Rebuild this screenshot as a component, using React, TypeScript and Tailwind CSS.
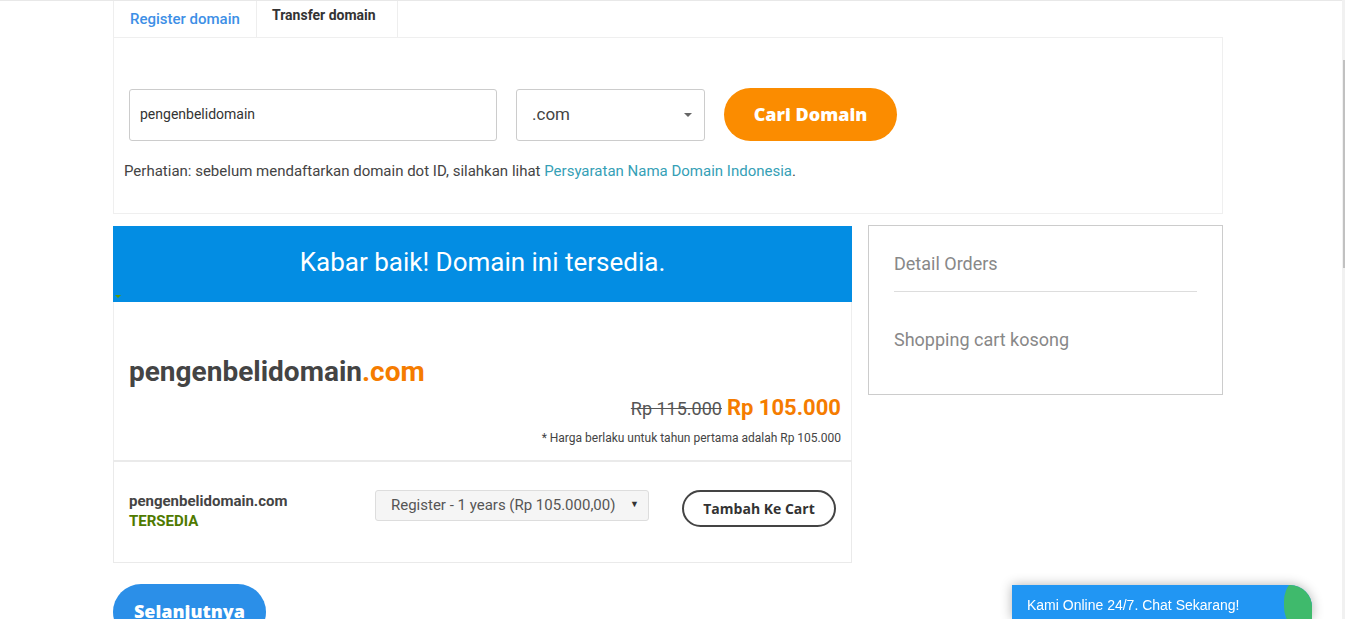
import React from "react";

const roboto = { fontFamily: "Roboto, 'Noto Sans', sans-serif" };
const heavy = { fontFamily: "'Open Sans', 'Noto Sans', sans-serif" };

export default function App() {
  return (
    <div className="flex h-[619px] overflow-hidden bg-white text-[#444]" style={roboto}>
      <div className="flex-1 border-t border-[#e8e8e8]">
        <div className="ml-[113px] w-[1110px]">
          {/* TABS */}
          <div className="flex h-[36px]">
            <div className="w-[143px] border-l border-[#eee] pl-[16px] pt-[7px] text-[15px] font-medium text-[#3d8fe6]">
              Register domain
            </div>
            <div className="w-[142px] border-x border-[#eee] pl-[15px] pt-[4px] text-[14px] font-bold text-[#333]">
              Transfer domain
            </div>
          </div>

          {/* SEARCH PANEL */}
          <div className="h-[177px] border border-[#efefef]">
            <div className="flex items-center pl-[15px] pt-[50px]">
              <div className="flex h-[52px] w-[368px] items-center rounded-[3px] border border-[#ccc] pl-[10px] text-[14px] text-[#333]">
                pengenbelidomain
              </div>
              <div className="ml-[19px] flex h-[52px] w-[189px] items-center justify-between rounded-[3px] border border-[#ccc] pl-[15px] pr-[12px] text-[17px] text-[#444]">
                <span>.com</span>
                <span className="h-0 w-0 border-x-[4px] border-t-[4px] border-x-transparent border-t-[#666]" />
              </div>
              <button
                className="ml-[19px] h-[53px] w-[173px] rounded-full bg-[#fb8c00] text-[18px] font-extrabold text-white"
                style={heavy}
              >
                Cari Domain
              </button>
            </div>
            <p className="mt-[20px] pl-[10px] text-[15px] leading-[20px] text-[#444]">
              Perhatian: sebelum mendaftarkan domain dot ID, silahkan lihat{" "}
              <span className="text-[#35a0b6]">Persyaratan Nama Domain Indonesia</span>.
            </p>
          </div>

          {/* RESULT */}
          <div className="mt-[12px] flex gap-[16px]">
            <div className="w-[739px]">
              <div className="relative flex h-[76px] items-center justify-center bg-[#038de3] pb-[4px] text-[26px] text-white">
                Kabar baik! Domain ini tersedia.
                <span className="absolute bottom-[4px] left-[2px] h-0 w-0 border-x-[3px] border-t-[3px] border-x-transparent border-t-[#5c9a00]" />
              </div>
              <div className="h-[158px] border-x border-[#eee] pl-[15px] pr-[10px] pt-[53px]">
                <div className="text-[28px] font-bold leading-[34px] text-[#444]">
                  pengenbelidomain<span className="text-[#f57c00]">.com</span>
                </div>
                <div className="mt-[5px] flex items-baseline justify-end gap-[5px] leading-[28px]">
                  <span className="text-[18px] text-[#555] line-through">Rp 115.000</span>
                  <span className="text-[22px] font-bold text-[#f57c00]">Rp 105.000</span>
                </div>
                <div className="mt-[7px] text-right text-[12px] leading-[16px] text-[#444]">
                  * Harga berlaku untuk tahun pertama adalah Rp 105.000
                </div>
              </div>
              <div className="flex h-[103px] items-center border border-t-2 border-[#eaeaea] px-[15px]">
                <div className="w-[246px] pb-[2px] text-[15px] font-bold leading-[20px]">
                  <div className="text-[#444]">pengenbelidomain.com</div>
                  <div className="text-[#4f7a00]">TERSEDIA</div>
                </div>
                <div className="mb-[14px] flex h-[31px] w-[274px] items-center justify-between rounded-[3px] border border-[#ddd] bg-[#f5f5f5] pl-[15px] pr-[9px] text-[15px] text-[#555]">
                  <span>Register - 1 years (Rp 105.000,00)</span>
                  <span className="text-[9px] text-[#333]">▼</span>
                </div>
                <button
                  className="mb-[7px] ml-[33px] h-[37px] w-[154px] rounded-full border-2 border-[#444] text-[14px] font-bold text-[#333]"
                  style={heavy}
                >
                  Tambah Ke Cart
                </button>
              </div>
            </div>

            <div className="-mt-[1px] h-[170px] w-[355px] border border-[#ccc] px-[25px] pt-[26px]">
              <div className="text-[18px] leading-[24px] text-[#888]">Detail Orders</div>
              <div className="mt-[15px] h-px bg-[#ddd]" />
              <div className="mt-[36px] text-[18px] leading-[24px] text-[#888]">Shopping cart kosong</div>
            </div>
          </div>

          <button
            className="mt-[21px] h-[56px] w-[153px] rounded-full bg-[#2b8fe8] pb-[2px] text-[18px] font-extrabold text-white"
            style={heavy}
          >
            Selanjutnya
          </button>
        </div>
      </div>

      {/* SCROLLBAR */}
      <div className="relative w-[3px] bg-[#f1f1f1]">
        <div className="absolute right-0 top-[60px] h-[208px] w-[2px] bg-[#c1c1c1]" />
      </div>

      {/* CHAT WIDGET */}
      <div
        className="fixed bottom-0 left-[1012px] h-[34px] w-[300px] overflow-hidden rounded-tr-[22px] bg-[#2196f3] pl-[15px] pt-[10px] text-[14px] text-white shadow-[0_0_12px_rgba(0,0,0,0.3)]"
        style={{ fontFamily: "'Liberation Sans', Arial, sans-serif" }}
      >
        Kami Online 24/7. Chat Sekarang!
        <span className="absolute right-[-28px] top-[-12px] h-[62px] w-[56px] rounded-full bg-[#3fba6c]" />
      </div>
    </div>
  );
}
